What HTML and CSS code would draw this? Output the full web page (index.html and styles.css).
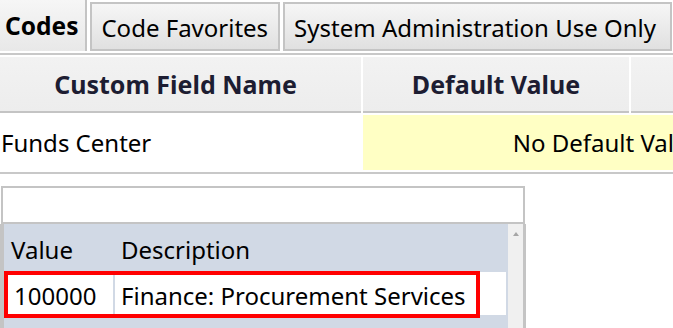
FILE: index.html
```html
<!DOCTYPE html>
<html lang="en">
<head>
  <meta charset="UTF-8" />
  <meta name="viewport" content="width=device-width, initial-scale=1.0"/>
  <title>Custom Fields</title>
  <link rel="stylesheet" href="styles.css">
</head>
<body>
  <div class="tabs">
    <div class="tab active">Codes</div>
    <div class="tab">Code Favorites</div>
    <div class="tab">System Administration Use Only</div>
  </div>

  <div class="fields">
    <div class="fields-row head">
      <div class="cell name">Custom Field Name</div>
      <div class="cell default">Default Value</div>
      <div class="cell extra"></div>
    </div>
    <div class="fields-row body">
      <div class="cell name">Funds Center</div>
      <div class="cell no-default">No Default Value</div>
    </div>
  </div>

  <div class="lookup">
    <div class="search"></div>
    <div class="list">
      <div class="list-main">
        <div class="list-head">
          <span class="col-value">Value</span>
          <span class="col-desc">Description</span>
        </div>
        <div class="list-row">
          <span class="col-value">100000</span>
          <span class="col-desc">Finance: Procurement Services</span>
          <div class="highlight"></div>
        </div>
      </div>
      <div class="scrollbar"><span class="arrow-up"></span></div>
    </div>
  </div>
</body>
</html>
```

FILE: styles.css
```css
* {
  box-sizing: border-box;
}
body {
  margin: 0;
  width: 673px;
  height: 328px;
  overflow: hidden;
  background: #fff;
  color: #000;
  font-family: "Noto Sans", sans-serif;
  font-size: 24px;
}

/* tab strip */
.tabs {
  display: flex;
  align-items: flex-end;
  gap: 3px;
  height: 51px;
}
.tab {
  height: 49px;
  display: flex;
  align-items: center;
  padding: 2px 10px 0 9px;
  border: 2px solid #c4c4c4;
  background: linear-gradient(#f6f6f6, #e0e0e0);
  white-space: nowrap;
}
.tab:last-child {
  padding-right: 14px;
}
.tab.active {
  height: 51px;
  border: 0;
  border-right: 2px solid #c4c4c4;
  padding: 0 7px 0 5px;
  font-size: 24.5px;
  font-weight: bold;
  background: linear-gradient(#f6f6f6, #e8e8e8);
}

/* custom field table */
.fields {
  width: 862px;
  margin: 2px 0 0 -10px;
  border-top: 2px solid #c8c8c8;
  padding-top: 2px;
}
.fields-row {
  display: flex;
  gap: 2px;
}
.cell {
  display: flex;
  align-items: center;
  white-space: nowrap;
}
.head .cell {
  height: 56px;
  justify-content: center;
  border-bottom: 2px solid #c4c4c4;
  background: linear-gradient(#f2f2f2, #ededed);
  font-size: 25px;
  font-weight: bold;
  color: #1d1d32;
}
.name {
  width: 371px;
}
.default {
  width: 266px;
}
.extra {
  flex: 1;
}
.body {
  padding: 2px 0;
  border-bottom: 2px solid #c8c8c8;
}
.body .cell {
  height: 55px;
}
.body .name {
  padding-left: 11px;
}
.no-default {
  flex: 1;
  justify-content: center;
  background: #ffffc4;
}

/* lookup list */
.lookup {
  width: 526px;
  margin-top: 12px;
}
.search {
  height: 38px;
  margin: 0 1px;
  border: 2px solid #c4c4c4;
}
.list {
  display: flex;
  height: 110px;
  border-left: 4px solid #c4c4c4;
  border-right: 3px solid #c4c4c4;
}
.list-main {
  flex: 1;
  background: #d1d9e5;
}
.list-head,
.list-row {
  display: grid;
  grid-template-columns: 109px 1fr;
  column-gap: 2px;
  align-items: center;
}
.list-head {
  height: 48px;
  padding-top: 2px;
}
.list-head .col-value {
  padding-left: 7px;
}
.list-head .col-desc {
  padding-left: 6px;
}
.list-row {
  position: relative;
  height: 43px;
  margin-right: 2px;
}
.list-row span {
  height: 100%;
  display: flex;
  align-items: center;
  padding-top: 4px;
  background: #fff;
}
.list-row .col-value {
  padding-left: 10px;
}
.list-row .col-desc {
  padding-left: 6px;
}
.highlight {
  position: absolute;
  left: 0;
  top: -1px;
  width: 476px;
  height: 47px;
  border: 4px solid #ff0000;
}
.scrollbar {
  width: 15px;
  background: #f0f0f0;
}
.arrow-up {
  display: block;
  width: 0;
  margin: 8px auto 0;
  border-left: 3px solid transparent;
  border-right: 3px solid transparent;
  border-bottom: 4px solid #a6a6a6;
}
```
